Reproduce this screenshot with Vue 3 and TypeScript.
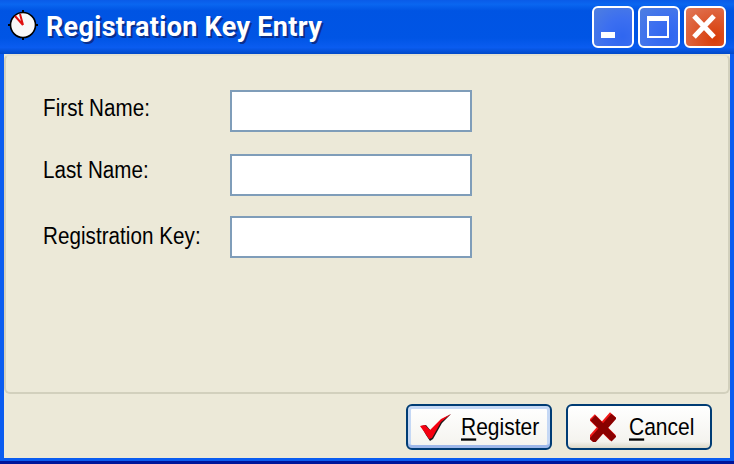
<script setup lang="ts">
const fields = ['First Name:', 'Last Name:', 'Registration Key:']
</script>

<template>
  <div class="window">
    <div class="titlebar">
      <svg class="app-icon" width="32" height="32" viewBox="0 0 32 32">
        <circle cx="16" cy="16" r="12.5" fill="#f8f8f8" stroke="#000" stroke-width="1.6" />
        <path d="M16 1v3M16 28v3M1 16h3M28 16h3" stroke="#000" stroke-width="2" shape-rendering="crispEdges" />
        <path d="M16 16L8 7M16 16L13 5" stroke="#e01010" stroke-width="2" fill="none" />
      </svg>
      <span class="title">Registration Key Entry</span>
      <div class="controls">
        <button class="ctl">
          <svg width="38" height="38" viewBox="0 0 38 38"><rect x="7" y="24" width="14" height="6" fill="#fff" /></svg>
        </button>
        <button class="ctl">
          <svg width="38" height="38" viewBox="0 0 38 38"><path d="M7 8h22v22H7zM9 13v15h18V13z" fill="#fff" fill-rule="evenodd" /></svg>
        </button>
        <button class="ctl close">
          <svg width="38" height="38" viewBox="0 0 38 38"><path d="M8 8L28 29M28 8L8 29" stroke="#fff" stroke-width="5" /></svg>
        </button>
      </div>
    </div>
    <div class="body">
      <div class="panel">
        <div v-for="f in fields" :key="f" class="row">
          <div class="lbl-box"><label class="lbl">{{ f }}</label></div>
          <input class="txt" type="text" />
        </div>
      </div>
      <div class="footer">
        <button class="btn primary">
          <svg width="34" height="28" viewBox="0 0 34 28">
            <path d="M2 13l5-1 5 6 10-11 10-6-9 9-9 16-3 2-4-6z" fill="#1a1a1a" />
            <path d="M1 13l5-1 5 5 11-11 10-5-10 8-9 16-3 1-4-6z" fill="#f40010" />
          </svg>
          <span class="cap"><u>R</u>egister</span>
        </button>
        <button class="btn cancel">
          <svg width="26" height="30" viewBox="0 0 26 30">
            <path d="M2 5L23 26M23 3L1 28" stroke="#f01818" stroke-width="8" fill="none" />
            <path d="M3 6L24 27M24 4L2 29" stroke="#8a0000" stroke-width="7" fill="none" />
          </svg>
          <span class="cap"><u>C</u>ancel</span>
        </button>
      </div>
    </div>
  </div>
</template>

<style>
html, body { margin: 0; overflow: hidden; }
</style>

<style scoped>
.window {
  width: 734px;
  height: 464px;
  display: flex;
  flex-direction: column;
  box-sizing: border-box;
  background: #0a5cf0;
  border-bottom: 3px solid #00149a;
  font-family: "Liberation Sans", Arial, sans-serif;
}
.titlebar {
  height: 54px;
  flex: none;
  display: flex;
  align-items: center;
  padding: 0 8px 0 7px;
  box-sizing: border-box;
  background: linear-gradient(#0a5be8 0, #0a66f0 8%, #0054e3 20%, #0055e5 70%, #0a5cf0 88%, #0049c8 100%);
}
.app-icon { margin-top: -5px; }
.title {
  margin-left: 7px;
  margin-top: -1px;
  font-family: Roboto, sans-serif;
  font-size: 27px;
  font-weight: 700;
  letter-spacing: 0.3px;
  color: #fff;
  text-shadow: 2px 2px 0 #0a2f8c;
  white-space: nowrap;
}
.controls {
  margin-left: auto;
  display: flex;
  gap: 4px;
}
.ctl {
  width: 42px;
  height: 42px;
  padding: 0;
  box-sizing: border-box;
  border: 2px solid #fff;
  border-radius: 6px;
  background: radial-gradient(circle at 75% 75%, #2f66f0 0, #3c6ff0 45%, #4f7fe0 100%);
  display: flex;
  align-items: center;
  justify-content: center;
}
.ctl.close {
  background: radial-gradient(circle at 75% 80%, #d83c08 0, #dd5a30 50%, #e07a5c 100%);
}
.body {
  flex: 1;
  display: flex;
  flex-direction: column;
  background: #ece9d8;
  margin: 0 4px 3px 4px;
}
.panel {
  flex: 1;
  border: 2px solid #d2d0bd;
  border-top-color: #e4e1cf;
  border-radius: 6px;
  padding: 34px 0 0 37px;
  display: flex;
  flex-direction: column;
  gap: 20px;
}
.row {
  display: flex;
  align-items: flex-start;
}
.row:nth-child(2) { margin-top: 2px; }
.lbl-box {
  width: 187px;
  margin-top: 5px;
}
.row:nth-child(2) .lbl-box { margin-top: 3px; }
.row:nth-child(3) .lbl-box { margin-top: 7px; }
.lbl {
  display: inline-block;
  font-size: 20.6px;
  line-height: 28px;
  letter-spacing: 0.05px;
  color: #000;
  transform: scaleY(1.14);
  transform-origin: 0 21px;
}
.txt {
  width: 242px;
  height: 42px;
  box-sizing: border-box;
  border: 2px solid #7f9db9;
  background: #fff;
  padding: 0;
  outline: none;
}
.footer {
  height: 64px;
  flex: none;
  display: flex;
  justify-content: flex-end;
  align-items: flex-start;
  gap: 14px;
  padding: 10px 18px 0 0;
  box-sizing: border-box;
}
.btn {
  width: 146px;
  height: 46px;
  box-sizing: border-box;
  border: 2px solid #003c74;
  border-radius: 6px;
  background: linear-gradient(#fff, #f4f3ee 85%, #dcd8c8);
  display: flex;
  align-items: center;
  gap: 13px;
  padding: 0 0 0 22px;
  font-family: inherit;
  font-size: 21px;
  color: #000;
}
.cap {
  display: inline-block;
  transform: scaleY(1.14);
}
.btn u {
  text-underline-offset: 3px;
  text-decoration-thickness: 2px;
}
.btn.primary {
  gap: 8px;
  padding-left: 11px;
  background: linear-gradient(#fff, #f4f3ee);
  box-shadow: inset 0 -3px 0 0 #9db7ea, inset 0 0 0 3px #c5d8f5;
}
</style>
